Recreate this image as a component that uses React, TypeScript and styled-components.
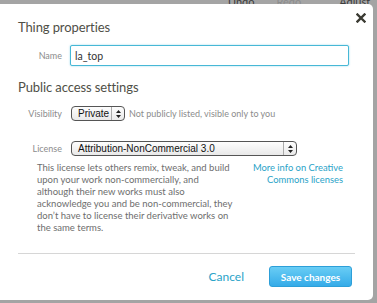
import React from 'react';
import styled, { createGlobalStyle } from 'styled-components';

const GlobalStyle = createGlobalStyle`
  html, body {
    margin: 0;
    padding: 0;
    background: #a4a4a4;
    font-family: Lato, "Open Sans", sans-serif;
    overflow: hidden;
  }
`;

const licenseLines = [
  'This license lets others remix, tweak, and build',
  'upon your work non-commercially, and',
  'although their new works must also',
  'acknowledge you and be non-commercial, they',
  'don’t have to license their derivative works on',
  'the same terms.',
];

const App = () => {
  return (
    <Page>
      <GlobalStyle />
      <Toolbar>
        <ToolItem $gap={22}>Undo</ToolItem>
        <ToolItem $gap={38} $muted>Redo</ToolItem>
        <ToolItem>Adjust</ToolItem>
      </Toolbar>
      <Modal>
        <CloseButton aria-label="Close">
          <svg width="10" height="10" viewBox="0 0 10 10">
            <path d="M1.5 1.5 L8.5 8.5 M8.5 1.5 L1.5 8.5" stroke="#3a3a32" strokeWidth="2.4" strokeLinecap="square" />
          </svg>
        </CloseButton>
        <Title>Thing properties</Title>
        <FieldRow $top={9}>
          <Label>Name</Label>
          <TextInput defaultValue="la_top" />
        </FieldRow>

        <Title $section>Public access settings</Title>
        <FieldRow $top={10}>
          <Label>Visibility</Label>
          <Select $width={54}>
            <span>Private</span>
            <Arrows />
          </Select>
          <Hint>Not publicly listed, visible only to you</Hint>
        </FieldRow>
        <FieldRow $top={20}>
          <Label>License</Label>
          <Select $width={226}>
            <span>Attribution-NonCommercial 3.0</span>
            <Arrows />
          </Select>
        </FieldRow>
        <Details>
          <Description>
            {licenseLines.map((line) => (
              <Line key={line}>{line}</Line>
            ))}
          </Description>
          <InfoLink href="#">
            <Line>More info on Creative</Line>
            <Line>Commons licenses</Line>
          </InfoLink>
        </Details>

        <Footer>
          <CancelLink href="#">Cancel</CancelLink>
          <SaveButton>Save changes</SaveButton>
        </Footer>
      </Modal>
    </Page>
  );
};

const Arrows = () => (
  <ArrowBox>
    <svg width="5" height="8" viewBox="0 0 5 8">
      <path d="M0 3 L2.5 0 L5 3 Z M0 5 L2.5 8 L5 5 Z" fill="#222" />
    </svg>
  </ArrowBox>
);

export default App;

const Page = styled.div`
  width: 377px;
  height: 303px;
`;

const Toolbar = styled.div`
  height: 4px;
  overflow: hidden;
  display: flex;
  padding-left: 228px;
`;

const ToolItem = styled.span<{ $muted?: boolean; $gap?: number }>`
  font-size: 11px;
  line-height: 11px;
  margin-top: -4px;
  margin-right: ${(p) => p.$gap ?? 0}px;
  color: ${(p) => (p.$muted ? '#8c8c8c' : '#3c3c3c')};
`;

const Modal = styled.div`
  position: relative;
  width: 373px;
  height: 296px;
  box-sizing: border-box;
  background: #fff;
  border-radius: 0 5px 5px 0;
  padding: 14px 0 0 18px;
`;

const CloseButton = styled.button`
  position: absolute;
  top: 9px;
  right: 7px;
  border: none;
  background: none;
  padding: 0;
  width: 10px;
  height: 10px;
  display: flex;
`;

const Title = styled.h2<{ $section?: boolean }>`
  margin: ${(p) => (p.$section ? '12px' : '0')} 0 0 0;
  font-size: 13px;
  line-height: 18px;
  font-weight: 400;
  letter-spacing: -0.1px;
  color: #4f4f47;
`;

const FieldRow = styled.div<{ $top: number }>`
  display: flex;
  align-items: center;
  margin-top: ${(p) => p.$top}px;
`;

const Label = styled.span`
  width: 44px;
  text-align: right;
  font-size: 9px;
  color: #8c8c8c;
  margin-right: 8px;
`;

const TextInput = styled.input`
  width: 279px;
  height: 21px;
  box-sizing: border-box;
  border: 1px solid #47b8d6;
  box-shadow: 0 0 2px rgba(71, 184, 214, 0.6);
  border-radius: 2px;
  padding: 0 4px;
  font-family: Lato, sans-serif;
  font-size: 10.5px;
  color: #333;
  outline: none;
`;

const Select = styled.div<{ $width: number }>`
  width: ${(p) => p.$width}px;
  height: 15px;
  box-sizing: border-box;
  border: 1px solid #555;
  border-radius: 4px;
  background: linear-gradient(#fdfdfd, #e9e9e9);
  display: flex;
  align-items: center;
  justify-content: space-between;
  font-family: "Liberation Sans", sans-serif;
  font-size: 10px;
  color: #111;
  padding-left: 6px;
  margin-left: 1px;
`;

const ArrowBox = styled.span`
  width: 12px;
  height: 100%;
  border-left: 1px solid #aaa;
  display: flex;
  align-items: center;
  justify-content: center;
`;

const Hint = styled.span`
  font-size: 9px;
  color: #8c8c8c;
  margin-left: 4px;
`;

const Details = styled.div`
  display: flex;
  justify-content: space-between;
  margin-top: 6px;
  padding-left: 19px;
  padding-right: 30px;
`;

const Description = styled.p`
  margin: 0;
  font-size: 9.5px;
  line-height: 12px;
  color: #6e6e6e;
`;

const Line = styled.span`
  display: block;
  white-space: nowrap;
`;

const InfoLink = styled.a`
  text-align: right;
  font-size: 9.4px;
  line-height: 12px;
  color: #2aa3c8;
  text-decoration: none;
`;

const Footer = styled.div`
  margin-top: 19px;
  margin-right: 18px;
  border-top: 1px solid #d6d6d6;
  padding-top: 12px;
  display: flex;
  justify-content: flex-end;
  align-items: center;
  gap: 25px;
  padding-right: 3px;
`;

const CancelLink = styled.a`
  font-size: 12px;
  color: #2aa3c8;
  text-decoration: none;
`;

const SaveButton = styled.button`
  width: 83px;
  height: 21px;
  border: 1px solid #2d9fd8;
  border-radius: 3px;
  background: linear-gradient(#69cdf5, #35abe8);
  color: #fff;
  font-family: Lato, sans-serif;
  font-weight: 700;
  font-size: 10px;
  padding: 0;
`;
